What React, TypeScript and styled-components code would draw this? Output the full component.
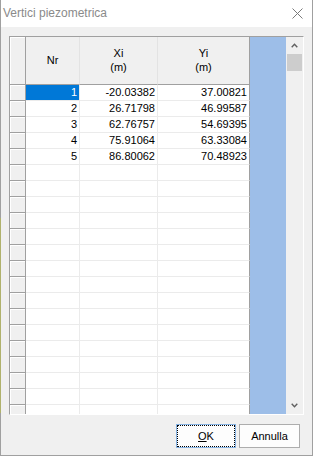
import styled, { createGlobalStyle } from 'styled-components';

const rows = [
  ['1', '-20.03382', '37.00821'],
  ['2', '26.71798', '46.99587'],
  ['3', '62.76757', '54.69395'],
  ['4', '75.91064', '63.33084'],
  ['5', '86.80062', '70.48923'],
];

const EMPTY_ROWS = 16;

const App = () => {
  const all = [...rows, ...Array.from({ length: EMPTY_ROWS }, () => ['', '', ''])];

  return (
    <>
      <GlobalStyle />
      <Window>
        <EdgeStripe />
        <TitleBar>
          <Title>Vertici piezometrica</Title>
          <CloseIcon width="11" height="11" viewBox="0 0 11 11">
            <path d="M0.5 0.5 L10.5 10.5 M10.5 0.5 L0.5 10.5" />
          </CloseIcon>
        </TitleBar>

        <Content>
          <GridFrame>
            <Columns>
              <HeaderCell $corner />
              <HeaderCell>Nr</HeaderCell>
              <HeaderCell>
                Xi
                <br />
                (m)
              </HeaderCell>
              <HeaderCell $edge>
                Yi
                <br />
                (m)
              </HeaderCell>

              {all.map((r, i) => (
                <Row key={i}>
                  <RowHead />
                  <DataCell $selected={i === 0}>{r[0]}</DataCell>
                  <DataCell>{r[1]}</DataCell>
                  <DataCell $edge>{r[2]}</DataCell>
                </Row>
              ))}
            </Columns>

            <BlueFill />

            <Scrollbar>
              <ArrowBox>
                <Chevron width="7" height="5" viewBox="0 0 7 5">
                  <path d="M0.7 4.2 L3.5 1.3 L6.3 4.2" />
                </Chevron>
              </ArrowBox>
              <Thumb />
              <Track />
              <ArrowBox>
                <Chevron width="7" height="5" viewBox="0 0 7 5">
                  <path d="M0.7 0.8 L3.5 3.7 L6.3 0.8" />
                </Chevron>
              </ArrowBox>
            </Scrollbar>
          </GridFrame>

          <ButtonRow>
            <Button $focused>
              <u>O</u>K
            </Button>
            <Button $wide>Annulla</Button>
          </ButtonRow>
        </Content>
      </Window>
    </>
  );
};

const GlobalStyle = createGlobalStyle`
  html, body {
    margin: 0;
    padding: 0;
    background: #ffffff;
  }
  body {
    font-family: "Liberation Sans", Arial, sans-serif;
  }
`;

const Window = styled.div`
  position: relative;
  width: 313px;
  height: 456px;
  box-sizing: border-box;
  border: 1px solid #a0a0a0;
  border-top: none;
  background: #f0f0f0;
  display: flex;
  flex-direction: column;
`;

const EdgeStripe = styled.div`
  position: absolute;
  left: -1px;
  top: 218px;
  width: 1px;
  height: 195px;
  background: #b0b26c;
`;

const TitleBar = styled.div`
  height: 26px;
  flex-shrink: 0;
  background: #ffffff;
  display: flex;
  align-items: center;
  justify-content: space-between;
  padding: 0 9px 1px 2px;
`;

const Title = styled.span`
  font-size: 12px;
  line-height: 14px;
  color: #8a8a8a;
`;

const CloseIcon = styled.svg`
  stroke: #7a7a7a;
  stroke-width: 1;
  fill: none;
`;

const Content = styled.div`
  flex: 1;
  display: flex;
  flex-direction: column;
  gap: 9px;
  padding: 9px 8px 8px;
`;

const GridFrame = styled.div`
  height: 379px;
  box-sizing: border-box;
  border: 1px solid;
  border-color: #a0a0a0 #ffffff #ffffff #a0a0a0;
  background: #ffffff;
  display: flex;
  overflow: hidden;
`;

const Columns = styled.div`
  width: 240px;
  display: grid;
  grid-template-columns: 16px 54px 78px 92px;
  grid-template-rows: 48px;
  grid-auto-rows: 16px;
  align-content: start;
  overflow: hidden;
`;

const Row = styled.div`
  display: contents;
`;

const HeaderCell = styled.div<{ $corner?: boolean; $edge?: boolean }>`
  box-sizing: border-box;
  background: #f0f0f0;
  border-right: 1px solid ${(p) => (p.$corner || p.$edge ? '#a0a0a0' : '#e3e3e3')};
  border-bottom: 1px solid #a0a0a0;
  box-shadow: ${(p) => (p.$corner ? 'inset 1px 1px 0 #ffffff' : 'none')};
  display: flex;
  align-items: center;
  justify-content: center;
  text-align: center;
  font-size: 11px;
  line-height: 14px;
  color: #000000;
  padding-bottom: 1px;
`;

const RowHead = styled.div`
  box-sizing: border-box;
  background: #f0f0f0;
  border-right: 1px solid #a0a0a0;
  border-bottom: 1px solid #a0a0a0;
  box-shadow: inset 1px 1px 0 #ffffff;
`;

const DataCell = styled.div<{ $selected?: boolean; $edge?: boolean }>`
  box-sizing: border-box;
  border-right: 1px solid ${(p) => (p.$edge ? '#a0a0a0' : '#ebebeb')};
  border-bottom: 1px solid #ebebeb;
  background: ${(p) => (p.$selected ? '#0078d7' : '#ffffff')};
  background-clip: padding-box;
  color: ${(p) => (p.$selected ? '#ffffff' : '#000000')};
  font-size: 11px;
  line-height: 15px;
  text-align: right;
  padding-right: 2px;
  white-space: nowrap;
  overflow: hidden;
`;

const BlueFill = styled.div`
  width: 36px;
  flex-shrink: 0;
  background: #9dbee8;
`;

const Scrollbar = styled.div`
  width: 17px;
  flex-shrink: 0;
  background: #f0f0f0;
  display: flex;
  flex-direction: column;
`;

const ArrowBox = styled.div`
  height: 17px;
  display: flex;
  align-items: center;
  justify-content: center;
`;

const Chevron = styled.svg`
  fill: none;
  stroke: #606060;
  stroke-width: 1.4;
`;

const Thumb = styled.div`
  height: 17px;
  margin: 0 1px;
  background: #cdcdcd;
`;

const Track = styled.div`
  flex: 1;
`;

const ButtonRow = styled.div`
  display: flex;
  justify-content: flex-end;
  gap: 3px;
  padding-right: 4px;
`;

const Button = styled.button<{ $focused?: boolean; $wide?: boolean }>`
  width: ${(p) => (p.$wide ? '61px' : '60px')};
  height: 24px;
  box-sizing: border-box;
  padding: 0;
  font-family: "Liberation Sans", Arial, sans-serif;
  font-size: 11px;
  color: #000000;
  background: #fdfdfd;
  border: 1px solid ${(p) => (p.$focused ? '#86b3e3' : '#adadad')};
  outline: ${(p) => (p.$focused ? '1px dotted #000000' : 'none')};
  outline-offset: -2px;
`;

export default App;
